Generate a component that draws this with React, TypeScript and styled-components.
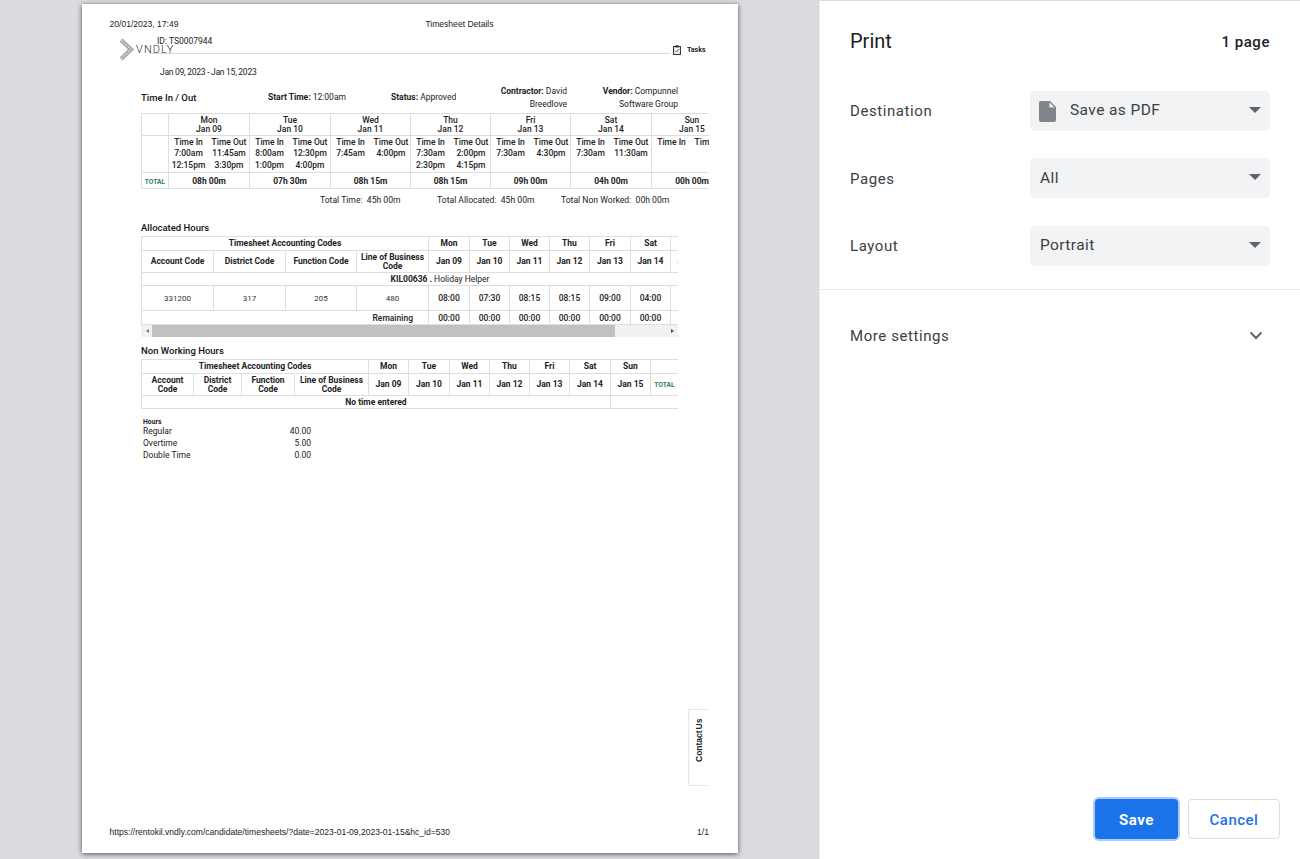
import React from 'react';
import styled, { createGlobalStyle } from 'styled-components';

const GlobalStyle = createGlobalStyle`
    html, body {
        margin: 0;
        padding: 0;
        height: 100%;
        overflow: hidden;
        font-family: Roboto, "Liberation Sans", sans-serif;
    }
    #root {
        height: 100%;
    }
`;

const DAYS = [
    { name: 'Mon', date: 'Jan 09', rows: [['7:00am', '11:45am'], ['12:15pm', '3:30pm']], total: '08h 00m', alloc: '08:00' },
    { name: 'Tue', date: 'Jan 10', rows: [['8:00am', '12:30pm'], ['1:00pm', '4:00pm']], total: '07h 30m', alloc: '07:30' },
    { name: 'Wed', date: 'Jan 11', rows: [['7:45am', '4:00pm']], total: '08h 15m', alloc: '08:15' },
    { name: 'Thu', date: 'Jan 12', rows: [['7:30am', '2:00pm'], ['2:30pm', '4:15pm']], total: '08h 15m', alloc: '08:15' },
    { name: 'Fri', date: 'Jan 13', rows: [['7:30am', '4:30pm']], total: '09h 00m', alloc: '09:00' },
    { name: 'Sat', date: 'Jan 14', rows: [['7:30am', '11:30am']], total: '04h 00m', alloc: '04:00' },
    { name: 'Sun', date: 'Jan 15', rows: [], total: '00h 00m', alloc: '00:00' },
];

const TIME_COLS = [27, 81, 81, 80, 80, 80, 81, 81];
const ALLOC_COLS = [72, 72, 71, 72, 41, 40, 40, 40, 41, 40, 40, 28];
const NON_COLS = [52, 48, 53, 74, 40, 41, 40, 40, 40, 41, 40, 28];

function App() {
    return (
        <>
            <GlobalStyle />
            <Screen>
                <Preview>
                    <Page>
                        <PrintHeader>
                            <span>20/01/2023, 17:49</span>
                            <HeaderTitle>Timesheet Details</HeaderTitle>
                        </PrintHeader>
                        <BrandRow>
                            <Brand>
                                <svg width="15" height="23" viewBox="0 0 15 23">
                                    <path d="M2 2 L12 11.5 L2 21" fill="none" stroke="#a9a9a9" strokeWidth="4.4" />
                                    <path d="M2 2 L12 11.5 L2 21" fill="none" stroke="#e4e4e4" strokeWidth="1.2" strokeDasharray="1.6 1.6" />
                                </svg>
                                <BrandName>VNDLY</BrandName>
                            </Brand>
                            <BrandMiddle>
                                <TimesheetId>ID: TS0007944</TimesheetId>
                                <BrandLine />
                            </BrandMiddle>
                            <TasksLink>
                                <svg width="8" height="10" viewBox="0 0 8 10">
                                    <rect x="0.6" y="1.6" width="6.8" height="7.8" fill="none" stroke="#222" strokeWidth="1" />
                                    <rect x="2.4" y="0.4" width="3.2" height="2" fill="#222" />
                                    <path d="M2 5.6 L3.4 7 L6 4" fill="none" stroke="#222" strokeWidth="0.8" />
                                </svg>
                                <span>Tasks</span>
                            </TasksLink>
                        </BrandRow>
                        <DateRange>Jan 09, 2023 - Jan 15, 2023</DateRange>
                        <Content>
                            <InfoRow>
                                <BlockTitle>Time In / Out</BlockTitle>
                                <InfoItem><b>Start Time:</b> 12:00am</InfoItem>
                                <InfoItem><b>Status:</b> Approved</InfoItem>
                                <InfoStack $width={67}><b>Contractor:</b> David<br />Breedlove</InfoStack>
                                <InfoStack $width={76}><b>Vendor:</b> Compunnel<br />Software Group</InfoStack>
                            </InfoRow>
                            <TableClip $width={568}>
                                <TimeTable style={{ width: 591 }}>
                                    <colgroup>
                                        {TIME_COLS.map((w, i) => <col key={i} width={w} />)}
                                    </colgroup>
                                    <tbody>
                                        <tr>
                                            <DayHead />
                                            {DAYS.map((d) => (
                                                <DayHead key={d.name}>{d.name}<br />{d.date}</DayHead>
                                            ))}
                                        </tr>
                                        <tr>
                                            <ClockCell />
                                            {DAYS.map((d) => (
                                                <ClockCell key={d.name}>
                                                    <ClockGrid>
                                                        <ClockLabel>Time In</ClockLabel>
                                                        <ClockLabel>Time Out</ClockLabel>
                                                        {d.rows.flat().map((t, i) => <span key={i}>{t}</span>)}
                                                    </ClockGrid>
                                                </ClockCell>
                                            ))}
                                        </tr>
                                        <tr>
                                            <TotalCell><TotalLabel>TOTAL</TotalLabel></TotalCell>
                                            {DAYS.map((d) => <TotalCell key={d.name}>{d.total}</TotalCell>)}
                                        </tr>
                                    </tbody>
                                </TimeTable>
                            </TableClip>
                            <Totals>
                                <span>Total Time:&nbsp; 45h 00m</span>
                                <span>Total Allocated:&nbsp; 45h 00m</span>
                                <span>Total Non Worked:&nbsp; 00h 00m</span>
                            </Totals>

                            <SectionTitle $top={16}>Allocated Hours</SectionTitle>
                            <TableClip $width={537}>
                                <GridTable style={{ width: 597 }}>
                                    <colgroup>
                                        {ALLOC_COLS.map((w, i) => <col key={i} width={w} />)}
                                    </colgroup>
                                    <tbody>
                                        <tr>
                                            <HeadCell $h={13} colSpan={4}>Timesheet Accounting Codes</HeadCell>
                                            {DAYS.map((d) => <HeadCell key={d.name}>{d.name}</HeadCell>)}
                                            <HeadCell />
                                        </tr>
                                        <tr>
                                            <HeadCell $h={21}>Account Code</HeadCell>
                                            <HeadCell>District Code</HeadCell>
                                            <HeadCell>Function Code</HeadCell>
                                            <HeadCell>Line of Business<br />Code</HeadCell>
                                            {DAYS.map((d) => <HeadCell key={d.name}>{d.date}</HeadCell>)}
                                            <HeadCell />
                                        </tr>
                                        <tr>
                                            <BodyCell $h={12} colSpan={12}><b>KIL00636 .</b> Holiday Helper</BodyCell>
                                        </tr>
                                        <tr>
                                            <CodeCell $h={24}>331200</CodeCell>
                                            <CodeCell>317</CodeCell>
                                            <CodeCell>205</CodeCell>
                                            <CodeCell>480</CodeCell>
                                            {DAYS.map((d) => <ValueCell key={d.name}>{d.alloc}</ValueCell>)}
                                            <ValueCell />
                                        </tr>
                                        <tr>
                                            <RemainingCell $h={13} colSpan={4}>Remaining</RemainingCell>
                                            {DAYS.map((d) => <ValueCell key={d.name}>00:00</ValueCell>)}
                                            <ValueCell />
                                        </tr>
                                    </tbody>
                                </GridTable>
                                <ScrollTrack>
                                    <ScrollArrow $dir="left" />
                                    <ScrollThumb />
                                    <ScrollArrow $dir="right" />
                                </ScrollTrack>
                            </TableClip>

                            <SectionTitle $top={8}>Non Working Hours</SectionTitle>
                            <TableClip $width={537}>
                                <GridTable style={{ width: 537 }}>
                                    <colgroup>
                                        {NON_COLS.map((w, i) => <col key={i} width={w} />)}
                                    </colgroup>
                                    <tbody>
                                        <tr>
                                            <HeadCell $h={13} colSpan={4}>Timesheet Accounting Codes</HeadCell>
                                            {DAYS.map((d) => <HeadCell key={d.name}>{d.name}</HeadCell>)}
                                            <HeadCell />
                                        </tr>
                                        <tr>
                                            <HeadCell $h={21}>Account<br />Code</HeadCell>
                                            <HeadCell>District<br />Code</HeadCell>
                                            <HeadCell>Function<br />Code</HeadCell>
                                            <HeadCell>Line of Business<br />Code</HeadCell>
                                            {DAYS.map((d) => <HeadCell key={d.name}>{d.date}</HeadCell>)}
                                            <HeadCell><TotalLabel>TOTAL</TotalLabel></HeadCell>
                                        </tr>
                                        <tr>
                                            <HeadCell $h={12} colSpan={10}>No time entered</HeadCell>
                                            <HeadCell colSpan={2} />
                                        </tr>
                                    </tbody>
                                </GridTable>
                            </TableClip>

                            <HoursBlock>
                                <HoursTitle>Hours</HoursTitle>
                                <HoursRow><span>Regular</span><span>40.00</span></HoursRow>
                                <HoursRow><span>Overtime</span><span>5.00</span></HoursRow>
                                <HoursRow><span>Double Time</span><span>0.00</span></HoursRow>
                            </HoursBlock>
                        </Content>
                        <ContactTab><span>Contact Us</span></ContactTab>
                        <PrintFooter>
                            <span>https://rentokil.vndly.com/candidate/timesheets/?date=2023-01-09,2023-01-15&amp;hc_id=530</span>
                            <span>1/1</span>
                        </PrintFooter>
                    </Page>
                </Preview>
                <Sidebar>
                    <SidebarHeader>
                        <Title>Print</Title>
                        <PageCount>1 page</PageCount>
                    </SidebarHeader>
                    <Settings>
                        <SettingRow>
                            <SettingLabel>Destination</SettingLabel>
                            <SelectBox>
                                <SelectValue>
                                    <svg width="17" height="21" viewBox="0 0 17 21">
                                        <path d="M2 0 H11 L17 6 V19 a2 2 0 0 1 -2 2 H2 a2 2 0 0 1 -2 -2 V2 a2 2 0 0 1 2 -2 Z" fill="#80868b" />
                                        <path d="M10.5 1.5 V6.5 H15.5 Z" fill="#f1f3f4" />
                                    </svg>
                                    <PdfText>Save as PDF</PdfText>
                                </SelectValue>
                                <SelectArrow />
                            </SelectBox>
                        </SettingRow>
                        <SettingRow>
                            <SettingLabel $drop>Pages</SettingLabel>
                            <SelectBox><SelectValue $drop>All</SelectValue><SelectArrow /></SelectBox>
                        </SettingRow>
                        <SettingRow>
                            <SettingLabel>Layout</SettingLabel>
                            <SelectBox><SelectValue>Portrait</SelectValue><SelectArrow /></SelectBox>
                        </SettingRow>
                    </Settings>
                    <MoreSettings>
                        <SettingLabel>More settings</SettingLabel>
                        <svg width="14" height="9" viewBox="0 0 14 9">
                            <path d="M1.5 1.5 L7 7 L12.5 1.5" fill="none" stroke="#5f6368" strokeWidth="2" />
                        </svg>
                    </MoreSettings>
                    <Actions>
                        <SaveButton>Save</SaveButton>
                        <CancelButton>Cancel</CancelButton>
                    </Actions>
                </Sidebar>
            </Screen>
        </>
    );
}

export default App;

const Screen = styled.div`
    display: flex;
    width: 1300px;
    height: 859px;
    overflow: hidden;
`;
const Preview = styled.div`
    flex: 0 0 819px;
    background: #dadce0;
    padding: 4px 0 0 82px;
    box-sizing: border-box;
`;
const Page = styled.div`
    position: relative;
    display: flex;
    flex-direction: column;
    width: 656px;
    height: 849px;
    background: #fff;
    box-shadow: 0 1px 5px rgba(0, 0, 0, 0.65);
    color: #222;
`;
const PrintHeader = styled.div`
    display: flex;
    padding: 15px 0 0 27.5px;
    font-family: "Liberation Sans", sans-serif;
    font-size: 8.55px;
    line-height: 11px;
`;
const HeaderTitle = styled.span`
    margin-left: 247px;
`;
const BrandRow = styled.div`
    display: flex;
    align-items: flex-start;
    margin: 6px 0 0 37px;
    height: 24px;
`;
const Brand = styled.div`
    display: flex;
    align-items: center;
    flex: 0 0 30px;
    min-width: 0;
    height: 24px;
    margin-top: 1px;
    white-space: nowrap;
    svg {
        flex-shrink: 0;
    }
`;
const BrandName = styled.span`
    margin-left: 2px;
    font-size: 11px;
    font-weight: 300;
    letter-spacing: 1.1px;
    color: #333;
    line-height: 1;
    margin-top: 1px;
`;
const BrandMiddle = styled.div`
    flex: 0 0 521px;
`;
const TimesheetId = styled.div`
    padding-left: 8px;
    font-size: 8.5px;
    line-height: 11px;
`;
const BrandLine = styled.div`
    margin-top: 6px;
    border-top: 1px solid #d6dbe3;
`;
const TasksLink = styled.div`
    display: flex;
    align-items: center;
    gap: 6px;
    margin: 9px 0 0 3px;
    font-size: 7px;
    font-weight: 700;
    line-height: 10px;
`;
const DateRange = styled.div`
    margin: 6px 0 0 78px;
    font-size: 8.5px;
    letter-spacing: -0.27px;
    line-height: 12px;
`;
const Content = styled.div`
    padding-left: 59px;
    width: 568px;
`;
const InfoRow = styled.div`
    display: grid;
    grid-template-columns: 127px 123px 109px 102px 76px;
    align-items: center;
    margin-top: 7px;
    height: 26px;
    font-size: 8.5px;
    b {
        font-weight: 700;
    }
`;
const BlockTitle = styled.div`
    margin-top: -1px;
    font-size: 9.5px;
    font-weight: 500;
    color: #111;
`;
const InfoItem = styled.div`
    margin-top: -2px;
`;
const InfoStack = styled.div<{ $width: number }>`
    width: ${(p) => p.$width}px;
    text-align: right;
    line-height: 13px;
    white-space: nowrap;
`;
const TableClip = styled.div<{ $width: number }>`
    width: ${(p) => p.$width}px;
    margin-top: 2px;
    overflow: hidden;
`;
const TimeTable = styled.table`
    border-collapse: collapse;
    table-layout: fixed;
    font-size: 8.5px;
    color: #222;
    td {
        border: 1px solid #dedede;
        padding: 0;
        text-align: center;
    }
`;
const DayHead = styled.td`
    height: 21px;
    line-height: 8.3px;
    font-weight: 500;
`;
const ClockCell = styled.td`
    height: 36px;
    vertical-align: top;
`;
const ClockGrid = styled.div`
    display: grid;
    grid-template-columns: 39px 42px;
    grid-template-rows: 11px 12px 12px;
    line-height: 12px;
    font-weight: 500;
    white-space: nowrap;
`;
const ClockLabel = styled.span`
    font-weight: 500;
    line-height: 12px;
`;
const TotalCell = styled.td`
    height: 15px;
    font-weight: 700;
`;
const TotalLabel = styled.span`
    font-size: 6.7px;
    font-weight: 700;
    color: #2f7d6d;
`;
const Totals = styled.div`
    display: flex;
    gap: 26.5px;
    margin-top: 5px;
    padding-left: 179px;
    font-size: 8.6px;
    line-height: 12px;
    span:first-child {
        margin-right: 10px;
    }
`;
const SectionTitle = styled.div<{ $top: number }>`
    margin-top: ${(p) => p.$top}px;
    font-size: 9.5px;
    font-weight: 500;
    line-height: 12px;
    color: #111;
`;
const GridTable = styled.table`
    border-collapse: collapse;
    table-layout: fixed;
    td {
        border: 1px solid #dedede;
        padding: 0;
        text-align: center;
        overflow: hidden;
    }
`;
const HeadCell = styled.td<{ $h?: number }>`
    ${(p) => (p.$h ? `height: ${p.$h}px;` : '')}
    font-size: 8.5px;
    font-weight: 700;
    line-height: 8.2px;
    color: #222;
    white-space: nowrap;
`;
const BodyCell = styled.td<{ $h?: number }>`
    ${(p) => (p.$h ? `height: ${p.$h}px;` : '')}
    font-size: 8.5px;
    b {
        font-weight: 700;
    }
`;
const CodeCell = styled.td<{ $h?: number }>`
    ${(p) => (p.$h ? `height: ${p.$h}px;` : '')}
    font-size: 8px;
    color: #333;
`;
const ValueCell = styled.td`
    font-size: 8.5px;
    font-weight: 500;
`;
const RemainingCell = styled.td<{ $h?: number }>`
    height: ${(p) => p.$h}px;
    font-size: 8.5px;
    font-weight: 500;
    && {
        text-align: right;
        padding-right: 15px;
    }
`;
const ScrollTrack = styled.div`
    display: flex;
    align-items: center;
    height: 12px;
    background: #f1f1f1;
`;
const ScrollThumb = styled.div`
    width: 463px;
    height: 12px;
    margin-left: 3px;
    background: #c1c1c1;
`;
const ScrollArrow = styled.div<{ $dir: 'left' | 'right' }>`
    width: 0;
    height: 0;
    border-top: 2px solid transparent;
    border-bottom: 2px solid transparent;
    ${(p) =>
        p.$dir === 'left'
            ? 'border-right: 3px solid #777; margin-left: 5px;'
            : 'border-left: 3px solid #505050; margin-left: 56px;'}
`;
const HoursBlock = styled.div`
    width: 168px;
    margin: 10px 0 0 2px;
`;
const HoursTitle = styled.div`
    font-size: 6.8px;
    font-weight: 700;
    line-height: 6px;
`;
const HoursRow = styled.div`
    display: flex;
    justify-content: space-between;
    font-size: 8.5px;
    line-height: 12px;
`;
const ContactTab = styled.div`
    position: absolute;
    left: 606px;
    top: 705px;
    display: flex;
    justify-content: center;
    box-sizing: border-box;
    width: 20px;
    height: 77px;
    border: 1px solid #e6e6e6;
    border-right: none;
    padding-top: 10px;
    font-family: "Liberation Sans", sans-serif;
    font-size: 8.5px;
    font-weight: 700;
    color: #222;
    span {
        writing-mode: vertical-rl;
        transform: rotate(180deg);
        height: 42px;
        white-space: nowrap;
        word-spacing: -1.5px;
    }
`;
const PrintFooter = styled.div`
    display: flex;
    justify-content: space-between;
    margin-top: auto;
    padding: 0 29px 15px 27.5px;
    font-family: "Liberation Sans", sans-serif;
    font-size: 8.55px;
    line-height: 11px;
`;

const Sidebar = styled.div`
    flex: 1;
    display: flex;
    flex-direction: column;
    box-sizing: border-box;
    border-left: 1px solid #e8eaed;
    border-top: 1px solid #dadce0;
    background: #fff;
    color: #202124;
`;
const SidebarHeader = styled.div`
    display: flex;
    justify-content: space-between;
    align-items: center;
    padding: 25px 30px 0;
    height: 30px;
`;
const Title = styled.div`
    font-size: 20px;
    line-height: 30px;
`;
const PageCount = styled.div`
    font-size: 15px;
    font-weight: 500;
    letter-spacing: 0.55px;
    margin-top: 2px;
`;
const Settings = styled.div`
    display: flex;
    flex-direction: column;
    gap: 27.4px;
    margin-top: 35px;
    padding: 0 30px 23px;
    border-bottom: 1px solid #e8eaed;
`;
const SettingRow = styled.div`
    display: flex;
    justify-content: space-between;
    align-items: center;
`;
const SettingLabel = styled.div<{ $drop?: boolean }>`
    margin-top: ${(p) => (p.$drop ? 2 : 0)}px;
    font-size: 15px;
    letter-spacing: 0.58px;
    color: #3c4043;
`;
const SelectBox = styled.div`
    display: flex;
    justify-content: space-between;
    align-items: center;
    box-sizing: border-box;
    width: 240px;
    height: 40px;
    padding: 0 9px 0 10px;
    border-radius: 5px;
    background: #f1f3f4;
    font-size: 15.5px;
    letter-spacing: 0.4px;
    color: #3c4043;
`;
const SelectValue = styled.div<{ $drop?: boolean }>`
    display: flex;
    align-items: center;
    margin-top: ${(p) => (p.$drop ? 0 : -2)}px;
    svg {
        margin: 2px 0 0 -1px;
    }
`;
const PdfText = styled.span`
    margin-left: 14px;
`;
const SelectArrow = styled.div`
    width: 0;
    height: 0;
    margin-right: 0;
    border-left: 6.5px solid transparent;
    border-right: 6.5px solid transparent;
    border-top: 6px solid #5f6368;
    margin-top: -2px;
`;
const MoreSettings = styled.div`
    display: flex;
    justify-content: space-between;
    align-items: center;
    margin-top: 37px;
    padding: 0 37px 0 30px;
`;
const Actions = styled.div`
    display: flex;
    align-items: center;
    gap: 10px;
    margin-top: auto;
    padding: 0 20px 20px 275px;
`;
const SaveButton = styled.button`
    box-sizing: border-box;
    width: 83px;
    height: 40px;
    padding-top: 2px;
    border: none;
    border-radius: 4px;
    background: #1a73e8;
    box-shadow: 0 0 0 2px #aecbfa;
    color: #fff;
    font-family: Roboto, sans-serif;
    font-size: 15px;
    font-weight: 700;
    letter-spacing: 0.5px;
`;
const CancelButton = styled.button`
    box-sizing: border-box;
    width: 92px;
    height: 40px;
    padding-top: 2px;
    border: 1px solid #dadce0;
    border-radius: 4px;
    background: #fff;
    color: #1a73e8;
    font-family: Roboto, sans-serif;
    font-size: 15px;
    font-weight: 500;
    letter-spacing: 0.5px;
`;
